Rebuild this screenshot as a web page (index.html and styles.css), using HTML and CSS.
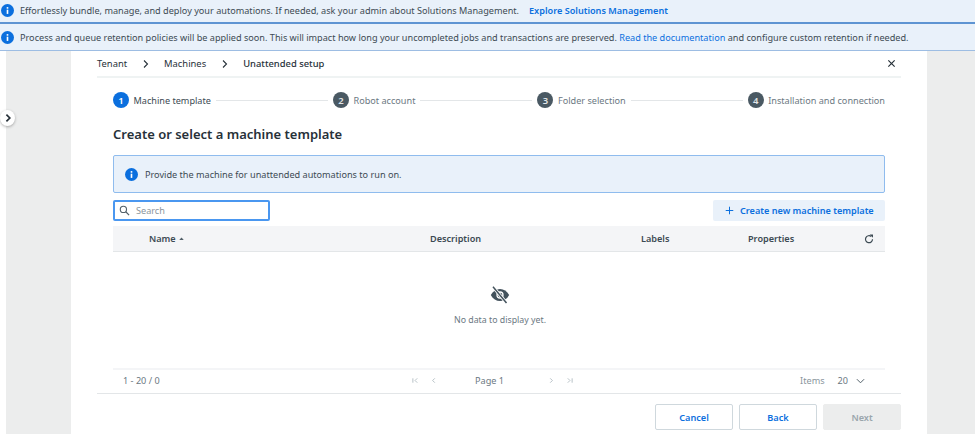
FILE: index.html
```html
<!DOCTYPE html>
<html lang="en">

<head>
    <meta charset="UTF-8">
    <meta name="viewport" content="width=device-width, initial-scale=1.0">
    <title>Unattended setup</title>
    <link rel="stylesheet" href="styles.css">
</head>

<body>
    <div class="banner banner-first">
        <svg class="info-icon" viewBox="0 0 16 16"><circle cx="8" cy="8" r="8" fill="#0b6fde"/><rect x="7" y="7" width="2" height="5.2" fill="#fff"/><rect x="7" y="3.8" width="2" height="2" fill="#fff"/></svg>
        <span>Effortlessly bundle, manage, and deploy your automations. If needed, ask your admin about Solutions Management.</span>
        <a class="banner-action">Explore Solutions Management</a>
    </div>
    <div class="banner banner-second">
        <svg class="info-icon" viewBox="0 0 16 16"><circle cx="8" cy="8" r="8" fill="#0b6fde"/><rect x="7" y="7" width="2" height="5.2" fill="#fff"/><rect x="7" y="3.8" width="2" height="2" fill="#fff"/></svg>
        <span>Process and queue retention policies will be applied soon. This will impact how long your uncompleted jobs and transactions are preserved. <a class="link">Read the documentation</a> and configure custom retention if needed.</span>
    </div>

    <div class="workspace">
        <div class="side-toggle">
            <svg viewBox="0 0 10 10" width="10" height="10"><path d="M3.4 1.6 6.8 5 3.4 8.4" fill="none" stroke="#273139" stroke-width="1.7"/></svg>
        </div>

        <main class="panel">
            <header class="crumbs">
                <span>Tenant</span>
                <svg class="crumb-sep" viewBox="0 0 8 10"><path d="M2 1.5 5.5 5 2 8.5" fill="none" stroke="#273139" stroke-width="1.1"/></svg>
                <span>Machines</span>
                <svg class="crumb-sep" viewBox="0 0 8 10"><path d="M2 1.5 5.5 5 2 8.5" fill="none" stroke="#273139" stroke-width="1.1"/></svg>
                <span class="crumb-current">Unattended setup</span>
                <svg class="close" viewBox="0 0 10 10"><path d="M1.5 1.5l7 7M8.5 1.5l-7 7" stroke="#273139" stroke-width="1.3"/></svg>
            </header>

            <div class="content">
                <ol class="stepper">
                    <li class="step step-active"><b>1</b><span>Machine template</span></li>
                    <li class="step-line"></li>
                    <li class="step"><b>2</b><span>Robot account</span></li>
                    <li class="step-line"></li>
                    <li class="step"><b>3</b><span>Folder selection</span></li>
                    <li class="step-line"></li>
                    <li class="step"><b>4</b><span>Installation and connection</span></li>
                </ol>

                <h1>Create or select a machine template</h1>

                <div class="notice">
                    <svg class="info-icon" viewBox="0 0 16 16"><circle cx="8" cy="8" r="8" fill="#0b6fde"/><rect x="7" y="7" width="2" height="5.2" fill="#fff"/><rect x="7" y="3.8" width="2" height="2" fill="#fff"/></svg>
                    <span>Provide the machine for unattended automations to run on.</span>
                </div>

                <div class="toolbar">
                    <label class="search">
                        <svg viewBox="0 0 12 12" width="11" height="11"><circle cx="4.8" cy="4.8" r="3.4" fill="none" stroke="#526069" stroke-width="1.2"/><path d="M7.4 7.4 11 11" stroke="#526069" stroke-width="1.3"/></svg>
                        <span>Search</span>
                    </label>
                    <button class="create">
                        <svg viewBox="0 0 10 10" width="9" height="9"><path d="M5 .8v8.4M.8 5h8.4" stroke="#0b6fde" stroke-width="1.1"/></svg>
                        Create new machine template
                    </button>
                </div>

                <div class="table-head">
                    <div class="col-name">Name <svg viewBox="0 0 6 4" width="5" height="3"><path d="M0 4 3 .5 6 4z" fill="#526069"/></svg></div>
                    <div class="col-desc">Description</div>
                    <div class="col-labels">Labels</div>
                    <div class="col-props">Properties</div>
                    <svg class="refresh" viewBox="0 0 12 12" width="10" height="10"><path d="M10.2 6.2A4.200 4.200 0 1 1 8.700 3" fill="none" stroke="#3c4a53" stroke-width="1.4"/><path d="M6.800 .6h4v4z" fill="#3c4a53"/></svg>
                </div>

                <div class="empty">
                    <svg viewBox="0 0 20 18" width="20" height="18"><path d="M.8 9C3 5 6.200 3 10 3s7 2 9.200 6c-2.200 4-5.400 6-9.200 6S3 13 .8 9z" fill="#43525c"/><circle cx="10" cy="9" r="3" fill="none" stroke="#fff" stroke-width="1.300"/><path d="M3 .8 16.500 17" stroke="#fff" stroke-width="3.200"/><path d="M3 .8 16.500 17" stroke="#43525c" stroke-width="1.500"/></svg>
                    <p>No data to display yet.</p>
                </div>

                <div class="pager">
                    <span class="pager-range">1 - 20 / 0</span>
                    <div class="pager-nav">
                        <svg viewBox="0 0 8 8" width="7" height="7"><path d="M1 1.500v5M6 1.500 3.500 4 6 6.500" fill="none" stroke="#a4b1b8" stroke-width=".9"/></svg>
                        <svg class="pager-prev" viewBox="0 0 8 8" width="7" height="7"><path d="M5.500 1.500 3 4l2.500 2.500" fill="none" stroke="#a4b1b8" stroke-width=".9"/></svg>
                        <span class="pager-page">Page 1</span>
                        <svg class="pager-next" viewBox="0 0 8 8" width="7" height="7"><path d="M2.500 1.500 5 4 2.500 6.500" fill="none" stroke="#a4b1b8" stroke-width=".9"/></svg>
                        <svg class="pager-last" viewBox="0 0 8 8" width="7" height="7"><path d="M7 1.500v5M2 1.500 4.500 4 2 6.500" fill="none" stroke="#a4b1b8" stroke-width=".9"/></svg>
                    </div>
                    <div class="pager-size">
                        <span class="pager-items">Items</span>
                        <span>20</span>
                        <svg viewBox="0 0 10 6" width="9" height="6"><path d="M1 1l4 4 4-4" fill="none" stroke="#526069" stroke-width="1.100"/></svg>
                    </div>
                </div>
            </div>

            <footer class="actions">
                <button class="btn">Cancel</button>
                <button class="btn">Back</button>
                <button class="btn btn-disabled">Next</button>
            </footer>
        </main>
    </div>
</body>

</html>
```

FILE: styles.css
```css
* {
    box-sizing: border-box;
}

html,
body {
    height: 100%;
}

body {
    margin: 0;
    padding: 0;
    display: flex;
    flex-direction: column;
    height: 434px;
    overflow: hidden;
    background-color: #fff;
    font-family: "Noto Sans", sans-serif;
    font-size: 9.15px;
    color: #3c4a53;
}

.info-icon {
    flex: none;
    width: 13px;
    height: 13px;
}

.banner {
    display: flex;
    flex: none;
    align-items: center;
    padding-left: 1px;
    background-color: #e9f1fa;
    white-space: nowrap;
}

.banner span {
    margin-left: 6px;
}

.banner-first {
    height: 24px;
    padding-bottom: 1px;
    border-bottom: 2px solid #5e94d2;
}

.banner-second {
    height: 27px;
    border-bottom: 1px solid #9dbde3;
}

.banner-action {
    margin-left: 10px;
    font-weight: 600;
    color: #0b6fde;
}

.link {
    color: #0b6fde;
}

.workspace {
    position: relative;
    display: flex;
    flex: 1;
    min-height: 0;
    justify-content: flex-end;
    padding-left: 6px;
}

.workspace::before {
    content: "";
    flex: none;
    width: 65px;
    background-color: #eceded;
}

.workspace::after {
    content: "";
    flex: none;
    width: 48px;
    background-color: #eceded;
}

.side-toggle {
    position: absolute;
    top: 59px;
    left: 0;
    display: flex;
    align-items: center;
    justify-content: center;
    width: 15px;
    height: 16px;
    border-radius: 50%;
    background-color: #fff;
    box-shadow: 0 1px 3px rgba(0, 0, 0, 0.3);
}

.panel {
    display: flex;
    flex: 1;
    flex-direction: column;
    min-width: 0;
    padding: 0 26px;
    background-color: #fff;
}

.crumbs {
    display: flex;
    flex: none;
    align-items: center;
    height: 27px;
    border-bottom: 2px solid #eff3f3;
    font-size: 9.4px;
    color: #273139;
}

.crumb-sep {
    width: 8px;
    height: 10px;
    margin: 0 14px 0 15px;
}

.crumb-current {
    font-weight: 500;
}

.close {
    width: 9px;
    height: 9px;
    margin-left: auto;
    margin-right: 5px;
}

.content {
    display: flex;
    flex: none;
    flex-direction: column;
    height: 316px;
    padding: 0 16px;
    border-bottom: 1px solid #e3e6e8;
}

.stepper {
    display: flex;
    flex: none;
    align-items: center;
    height: 32px;
    margin: 6px 0 0;
    padding: 0;
    list-style: none;
}

.step {
    display: flex;
    flex: none;
    align-items: center;
    gap: 4.5px;
    color: #6b7882;
}

.step b {
    display: flex;
    align-items: center;
    justify-content: center;
    width: 16px;
    height: 16px;
    border-radius: 50%;
    background-color: #4a5963;
    color: #e3e6e8;
    font-size: 9.5px;
    font-weight: 600;
}

.step-active {
    color: #3c4a53;
}

.step-active b {
    background-color: #0b6fde;
    color: #fff;
}

.step-line {
    flex: 1;
    height: 1px;
    margin: 0 5px;
    background-color: #e3e6e8;
}

h1 {
    flex: none;
    margin: 8px 0 0;
    font-size: 13px;
    font-weight: 600;
    line-height: 20px;
    color: #273139;
}

.notice {
    display: flex;
    flex: none;
    align-items: center;
    gap: 7px;
    height: 38px;
    margin-top: 11px;
    padding-left: 11px;
    border: 1px solid #8fbcee;
    border-radius: 2px;
    background-color: #e9f1fa;
}

.toolbar {
    display: flex;
    flex: none;
    align-items: center;
    justify-content: space-between;
    margin-top: 7px;
}

.search {
    display: flex;
    align-items: center;
    gap: 6px;
    width: 157px;
    height: 21px;
    padding: 0 0 1px 4px;
    border: 2px solid #4a97f0;
    border-radius: 2px;
    color: #8a959d;
}

.create {
    display: flex;
    align-items: center;
    gap: 6px;
    width: 172px;
    height: 21px;
    padding: 0 0 0 12px;
    border: none;
    border-radius: 2px;
    background-color: #e9f1fa;
    font-family: inherit;
    font-size: 9.15px;
    font-weight: 600;
    color: #0b6fde;
}

.table-head {
    position: relative;
    display: flex;
    flex: none;
    align-items: center;
    height: 26px;
    margin-top: 5px;
    border-bottom: 1px solid #e3e6e8;
    background-color: #f4f5f7;
    font-weight: 600;
    color: #3c4a53;
}

.col-name {
    display: flex;
    align-items: center;
    gap: 3px;
    width: 317px;
    padding-left: 36px;
}

.col-desc {
    width: 211px;
}

.col-labels {
    width: 107px;
}

.col-props {
    flex: 1;
}

.refresh {
    margin-right: 11px;
}

.empty {
    display: flex;
    flex: 1;
    flex-direction: column;
    align-items: center;
    padding: 34px 0 0 2px;
    color: #6b7882;
}

.empty p {
    margin: 10px 0 0;
    font-size: 8.8px;
}

.pager {
    display: flex;
    flex: none;
    align-items: center;
    height: 25px;
    padding: 0 0 2px 10px;
    border-top: 2px solid #f4f5f7;
    color: #6b7882;
}

.pager-range {
    width: 289px;
}

.pager-nav {
    display: flex;
    align-items: center;
}

.pager-prev {
    margin-left: 11px;
}

.pager-page {
    width: 105px;
    text-align: center;
}

.pager-next {
    margin-left: 6px;
}

.pager-last {
    margin-left: 11px;
}

.pager-size {
    display: flex;
    align-items: center;
    gap: 13px;
    margin-left: auto;
    margin-right: 20px;
}

.pager-size svg {
    margin-left: -5px;
}

.pager-items {
    color: #8a959d;
}

.actions {
    display: flex;
    flex: none;
    justify-content: flex-end;
    gap: 6px;
    margin-top: 10px;
}

.btn {
    width: 78px;
    height: 26px;
    padding: 0;
    border: 1px solid #cfd8dd;
    border-radius: 2px;
    background-color: #fff;
    font-family: inherit;
    font-size: 9.15px;
    font-weight: 600;
    color: #0b6fde;
}

.btn-disabled {
    border-color: #eceded;
    background-color: #eceded;
    color: #9aa5ac;
}
```
